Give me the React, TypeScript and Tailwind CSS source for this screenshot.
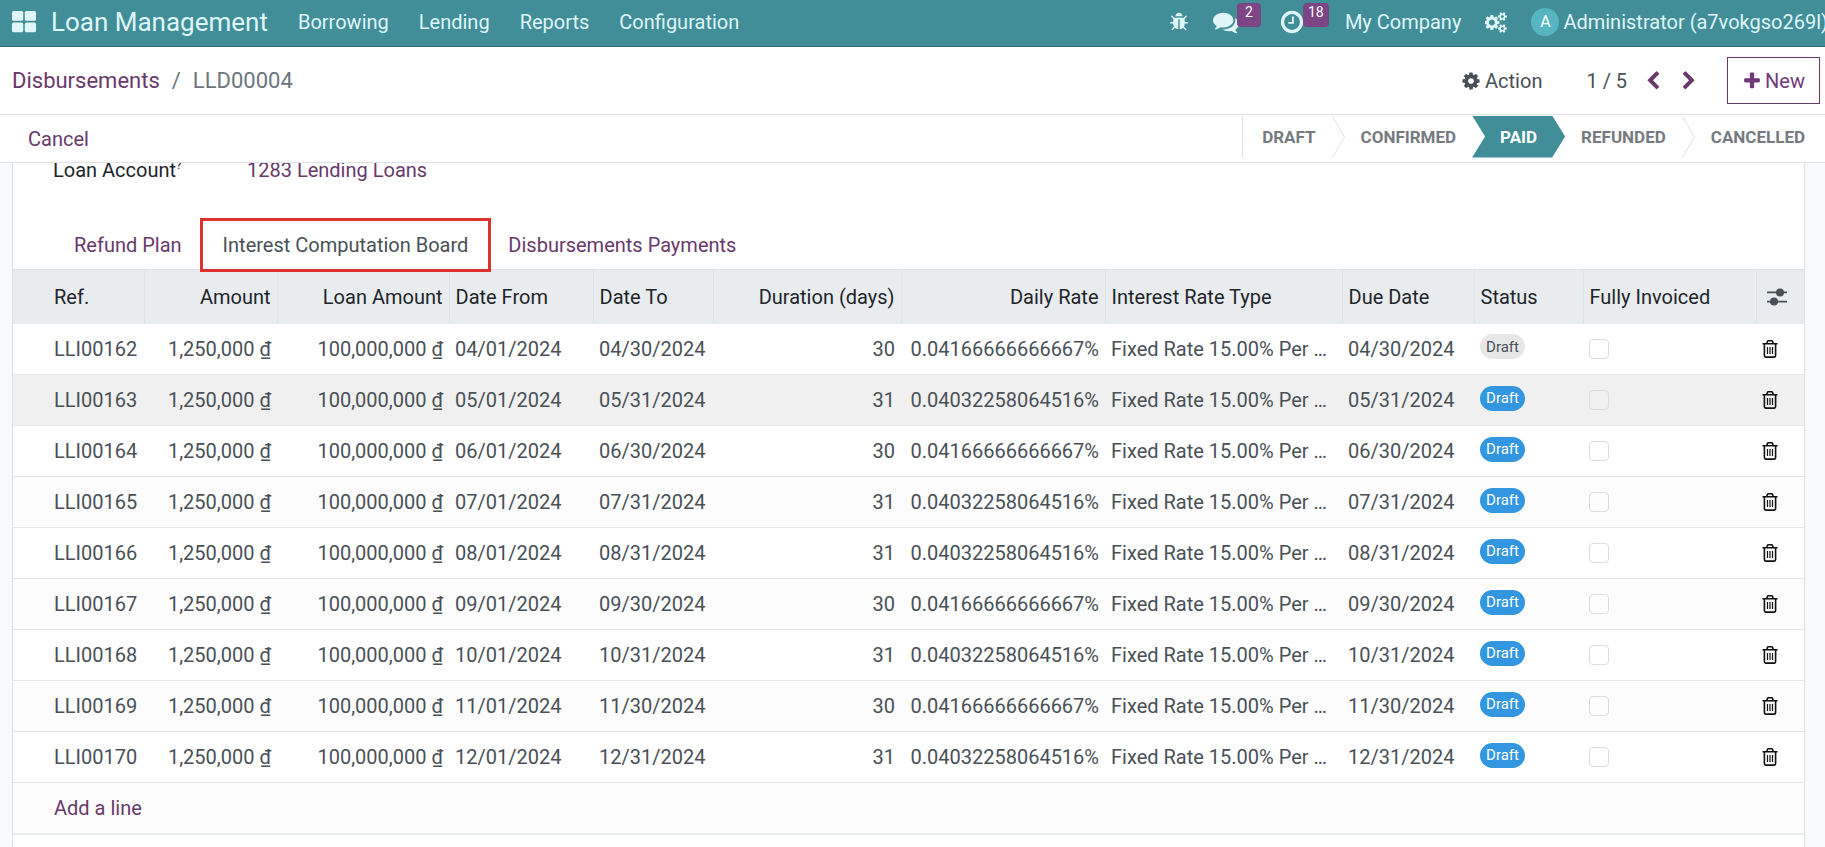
import { ReactNode } from "react";

interface InterestLine {
  ref: string;
  from: string;
  to: string;
  days: number;
  posted: boolean;
}

const LINES: InterestLine[] = [
  { ref: "LLI00162", from: "04/01/2024", to: "04/30/2024", days: 30, posted: true },
  { ref: "LLI00163", from: "05/01/2024", to: "05/31/2024", days: 31, posted: false },
  { ref: "LLI00164", from: "06/01/2024", to: "06/30/2024", days: 30, posted: false },
  { ref: "LLI00165", from: "07/01/2024", to: "07/31/2024", days: 31, posted: false },
  { ref: "LLI00166", from: "08/01/2024", to: "08/31/2024", days: 31, posted: false },
  { ref: "LLI00167", from: "09/01/2024", to: "09/30/2024", days: 30, posted: false },
  { ref: "LLI00168", from: "10/01/2024", to: "10/31/2024", days: 31, posted: false },
  { ref: "LLI00169", from: "11/01/2024", to: "11/30/2024", days: 30, posted: false },
  { ref: "LLI00170", from: "12/01/2024", to: "12/31/2024", days: 31, posted: false },
];

const RATES: Record<number, string> = {
  30: "0.04166666666667%",
  31: "0.04032258064516%",
};

const COLUMNS = [
  { label: "Ref.", className: "w-[131px] pl-[41px] pr-1.5 text-left" },
  { label: "Amount", className: "w-[133px] px-1.5 text-right" },
  { label: "Loan Amount", className: "w-[172px] px-1.5 text-right" },
  { label: "Date From", className: "w-36 px-1.5 text-left" },
  { label: "Date To", className: "w-[120px] px-1.5 text-left" },
  { label: "Duration (days)", className: "px-1.5 text-right" },
  { label: "Daily Rate", className: "w-[204px] px-1.5 text-right" },
  { label: "Interest Rate Type", className: "w-[237px] px-1.5 text-left" },
  { label: "Due Date", className: "w-[132px] px-1.5 text-left" },
  { label: "Status", className: "w-[109px] px-1.5 text-left" },
  { label: "Fully Invoiced", className: "w-[173px] px-1.5 text-left" },
];

const ICONS = {
  bug: "M1696 960q0 26-19 45t-45 19h-224q0 171-67 290l208 209q19 19 19 45t-19 45q-18 19-45 19t-45-19l-198-197q-5 5-15 13t-42 28.5-65 36.5-82 29-97 13v-896h-128v896q-51 0-101.5-13.5t-87-33-66-39-43.5-32.5l-15-14-183 207q-20 21-48 21-24 0-43-16-19-18-20.5-44.5t15.5-46.5l202-227q-58-114-58-274h-224q-26 0-45-19t-19-45 19-45 45-19h224v-294l-173-173q-19-19-19-45t19-45 45-19 45 19l173 173h844l173-173q19-19 45-19t45 19 19 45-19 45l-173 173v294h224q26 0 45 19t19 45zm-480-576h-640q0-133 93.5-226.5t226.5-93.5 226.5 93.5 93.5 226.5z",
  comments:
    "M1408 768q0 139-94 257t-256.5 186.5-353.5 68.5q-86 0-176-16-124 88-278 128-36 9-86 16h-3q-11 0-20.5-8t-11.5-21q-1-3-1-6.5t.5-6.5 2-6l2.5-5 3.5-5.5 4-5 4.5-5 4-4.5q5-6 23-25t26-29.5 22.5-29 25-38.5 20.5-44q-124-72-195-177t-71-224q0-139 94-257t256.5-186.5 353.5-68.5 353.5 68.5 256.5 186.5 94 257zm384 256q0 120-71 224.5t-195 176.5q10 24 20.5 44t25 38.5 22.5 29 26 29.5 23 25q1 1 4 4.5t4.5 5 4 5 3.5 5.5l2.5 5 2 6 .5 6.5-1 6.5q-3 14-13 22t-22 7q-50-7-86-16-154-40-278-128-90 16-176 16-271 0-472-132 58 4 88 4 161 0 309-45t264-129q125-92 192-212t67-254q0-77-23-152 129 71 204 178t75 230z",
  clock:
    "M1024 544v448q0 14-9 23t-23 9h-320q-14 0-23-9t-9-23v-64q0-14 9-23t23-9h224v-352q0-14 9-23t23-9h64q14 0 23 9t9 23zm416 352q0-148-73-273t-198-198-273-73-273 73-198 198-73 273 73 273 198 198 273 73 273-73 198-198 73-273zm224 0q0 209-103 385.5t-279.5 279.5-385.5 103-385.5-103-279.5-279.5-103-385.5 103-385.5 279.5-279.5 385.5-103 385.5 103 279.5 279.5 103 385.5z",
  cog: "M1152 896q0-106-75-181t-181-75-181 75-75 181 75 181 181 75 181-75 75-181zm512-109v222q0 12-8 23t-20 13l-185 28q-19 54-39 91 35 50 107 138 10 12 10 25t-9 23q-27 37-99 108t-94 71q-12 0-26-9l-138-108q-44 23-91 38-16 136-29 186-7 28-36 28h-222q-14 0-24.5-8.5t-11.5-21.5l-28-184q-49-16-90-37l-141 107q-10 9-25 9-14 0-25-11-126-114-165-168-7-10-7-23 0-12 8-23 15-21 51-66.5t54-70.5q-27-50-41-99l-183-27q-13-2-21-12.5t-8-23.5v-222q0-12 8-23t19-13l186-28q14-46 39-92-40-57-107-138-10-12-10-24 0-10 9-23 26-36 98.5-107.5t94.5-71.5q13 0 26 10l138 107q44-23 91-38 16-136 29-186 7-28 36-28h222q14 0 24.5 8.5t11.5 21.5l28 184q49 16 90 37l142-107q9-9 24-9 13 0 25 10 129 119 165 170 7 8 7 22 0 12-8 23-15 21-51 66.5t-54 70.5q26 50 41 98l183 28q13 2 21 12.5t8 23.5z",
  cogs: "M832 896q0-106-75-181t-181-75-181 75-75 181 75 181 181 75 181-75 75-181zm768 512q0-52-38-90t-90-38-90 38-38 90q0 53 37.5 90.5t90.5 37.5 90.5-37.5 37.5-90.5zm0-1024q0-52-38-90t-90-38-90 38-38 90q0 53 37.5 90.5t90.5 37.5 90.5-37.5 37.5-90.5zm-384 421v185q0 10-7 19.5t-16 10.5l-155 24q-11 35-32 76 34 48 90 115 7 11 7 20 0 12-7 19-23 30-82.5 89.5t-78.5 59.5q-11 0-21-7l-115-90q-37 19-77 31-11 108-23 155-7 24-30 24h-186q-11 0-20-7.5t-10-17.5l-23-153q-34-10-75-31l-118 89q-7 7-20 7-11 0-21-8-144-133-144-160 0-9 7-19 10-14 41-53t47-61q-23-44-35-82l-152-24q-10-1-17-9.5t-7-19.5v-185q0-10 7-19.5t16-10.5l155-24q11-35 32-76-34-48-90-115-7-11-7-20 0-12 7-20 22-30 82-89t79-59q11 0 21 7l115 90q34-18 77-32 11-108 23-154 7-24 30-24h186q11 0 20 7.5t10 17.5l23 153q34 10 75 31l118-89q8-7 20-7 11 0 21 8 144 133 144 160 0 8-7 19-12 16-42 54t-45 60q23 48 34 82l152 23q10 2 17 10.5t7 19.5zm640 533v140q0 16-149 31-12 27-30 52 51 113 51 138 0 4-4 7-122 71-124 71-8 0-46-47t-52-68q-20 2-30 2t-30-2q-14 21-52 68t-46 47q-2 0-124-71-4-3-4-7 0-25 51-138-18-25-30-52-149-15-149-31v-140q0-16 149-31 13-29 30-52-51-113-51-138 0-4 4-7 4-2 35-20t59-34 30-16q8 0 46 46.5t52 67.5q20-2 30-2t30 2q51-71 92-112l6-2q4 0 124 70 4 3 4 7 0 25-51 138 17 23 30 52 149 15 149 31zm0-1024v140q0 16-149 31-12 27-30 52 51 113 51 138 0 4-4 7-122 71-124 71-8 0-46-47t-52-68q-20 2-30 2t-30-2q-14 21-52 68t-46 47q-2 0-124-71-4-3-4-7 0-25 51-138-18-25-30-52-149-15-149-31v-140q0-16 149-31 13-29 30-52-51-113-51-138 0-4 4-7 4-2 35-20t59-34 30-16q8 0 46 46.5t52 67.5q20-2 30-2t30 2q51-71 92-112l6-2q4 0 124 70 4 3 4 7 0 25-51 138 17 23 30 52 149 15 149 31z",
  plus: "M1600 736v192q0 40-28 68t-68 28h-416v416q0 40-28 68t-68 28h-192q-40 0-68-28t-28-68v-416h-416q-40 0-68-28t-28-68v-192q0-40 28-68t68-28h416v-416q0-40 28-68t68-28h192q40 0 68 28t28 68v416h416q40 0 68 28t28 68z",
  left: "M1427 301l-531 531 531 531q19 19 19 45t-19 45l-166 166q-19 19-45 19t-45-19l-742-742q-19-19-19-45t19-45l742-742q19-19 45-19t45 19l166 166q19 19 19 45t-19 45z",
  right:
    "M1363 877l-742 742q-19 19-45 19t-45-19l-166-166q-19-19-19-45t19-45l531-531-531-531q-19-19-19-45t19-45l166-166q19-19 45-19t45 19l742 742q19 19 19 45t-19 45z",
};

function Icon({
  name,
  className,
  viewBox = "0 0 1792 1792",
}: {
  name: keyof typeof ICONS;
  className: string;
  viewBox?: string;
}) {
  return (
    <svg className={`shrink-0 ${className}`} viewBox={viewBox} fill="currentColor" aria-hidden="true">
      <path d={ICONS[name]} />
    </svg>
  );
}

function TrashIcon() {
  return (
    <svg
      className="h-[18px] w-4"
      viewBox="0 0 16 18"
      fill="none"
      stroke="currentColor"
      strokeWidth="1.6"
      aria-hidden="true"
    >
      <path d="M0.5 3.8h15M4.8 3.5l.7-2.2q.2-.5.8-.5h3.4q.6 0 .8.5l.7 2.2M2.4 4v11.6q0 1.5 1.3 1.5h8.6q1.3 0 1.3-1.5V4" />
      <path d="M5.5 7v7M8 7v7M10.5 7v7" strokeWidth="1.2" />
    </svg>
  );
}

function NavLink({ children }: { children: ReactNode }) {
  return (
    <a href="#" className="flex h-full items-center px-[15px]">
      {children}
    </a>
  );
}

function CountBadge({ children }: { children: ReactNode }) {
  return (
    <span className="absolute -top-1.5 left-6 h-6 min-w-6 rounded bg-[#7c4584] px-[5px] text-center text-sm leading-[18px] text-white">
      {children}
    </span>
  );
}

function Navbar() {
  return (
    <header className="flex h-[47px] shrink-0 items-center overflow-hidden whitespace-nowrap border-b border-[#2f6b72] bg-[#418e99] pb-0.5 text-[#dff6f8]">
      <button className="ml-3 mr-[15px]" aria-label="Apps">
        <svg className="h-[22px] w-6" viewBox="0 0 24 22" fill="currentColor" aria-hidden="true">
          <rect x="0" y="0" width="11.2" height="9.8" rx="1.5" />
          <rect x="12.8" y="0" width="11.2" height="9.8" rx="1.5" />
          <rect x="0" y="11.5" width="11.2" height="9.8" rx="1.5" />
          <rect x="12.8" y="11.5" width="11.2" height="9.8" rx="1.5" />
        </svg>
      </button>
      <a href="#" className="mr-[15px] text-[26px] leading-8">
        Loan Management
      </a>
      <nav className="flex h-full items-center">
        <NavLink>Borrowing</NavLink>
        <NavLink>Lending</NavLink>
        <NavLink>Reports</NavLink>
        <NavLink>Configuration</NavLink>
      </nav>
      <div className="-mr-[3px] ml-auto flex h-full shrink-0 items-center">
        <button className="mr-6" aria-label="Debug">
          <Icon name="bug" className="size-5" />
        </button>
        <button className="relative mr-10" aria-label="Messages">
          <Icon name="comments" className="size-[26px]" />
          <CountBadge>2</CountBadge>
        </button>
        <button className="relative mr-10" aria-label="Activities">
          <Icon name="clock" className="size-[26px]" />
          <CountBadge>18</CountBadge>
        </button>
        <button className="mr-6">My Company</button>
        <button className="mr-6" aria-label="Developer tools">
          <Icon name="cogs" className="h-[21px] w-[22px]" viewBox="0 0 1856 1792" />
        </button>
        <button className="flex items-center gap-1">
          <span className="flex size-7 items-center justify-center rounded-full bg-[#56b5c0] text-base text-white">
            A
          </span>
          Administrator (a7vokgso269l)
        </button>
      </div>
    </header>
  );
}

function ControlPanel() {
  return (
    <div className="flex h-[68px] shrink-0 items-center border-b border-[#dee2e6] bg-white pl-3 pr-[5px]">
      <ol className="flex gap-3 text-[22px] leading-8 text-[#6c757d]">
        <li>
          <a href="#" className="text-[#68396b]">
            Disbursements
          </a>
        </li>
        <li aria-hidden="true">/</li>
        <li>LLD00004</li>
      </ol>
      <button className="ml-auto mr-11 flex items-center gap-1">
        <Icon name="cog" className="size-5" />
        Action
      </button>
      <span className="mr-4">1 / 5</span>
      <button className="mr-4 text-[#68396b]" aria-label="Previous">
        <Icon name="left" className="size-5" />
      </button>
      <button className="mr-7 text-[#68396b]" aria-label="Next">
        <Icon name="right" className="size-5" />
      </button>
      <button className="flex h-[47px] items-center gap-[3px] border border-[#68396b] px-[14px] text-[#71397a]">
        <Icon name="plus" className="size-5" />
        New
      </button>
    </div>
  );
}

function StepDivider() {
  return (
    <svg className="h-[42px] w-[13px]" viewBox="0 0 13 42" fill="none" stroke="#dee2e6" aria-hidden="true">
      <path d="M0.5 0.5L12.5 21L0.5 41.5" />
    </svg>
  );
}

function StatusBar() {
  return (
    <div className="flex h-12 shrink-0 items-center justify-between border-b border-[#dee2e6] bg-white">
      <button className="ml-7 text-[#68396b]">Cancel</button>
      <div className="-mt-1 flex h-[42px] items-center border-l border-[#dee2e6] text-[17px] font-bold text-[#757b81]">
        <button className="pl-[19px] pr-4">DRAFT</button>
        <StepDivider />
        <button className="px-4">CONFIRMED</button>
        <button className="h-full bg-[#418e99] px-7 text-white [clip-path:polygon(0_0,calc(100%-13px)_0,100%_50%,calc(100%-13px)_100%,0_100%,13px_50%)]">
          PAID
        </button>
        <button className="px-4">REFUNDED</button>
        <StepDivider />
        <button className="pl-4 pr-5">CANCELLED</button>
      </div>
    </div>
  );
}

function InterestTable() {
  return (
    <table className="w-full table-fixed border-collapse">
      <thead>
        <tr className="h-[54px] border-t border-[#dee2e6] bg-[#e9ecef] text-[#212529]">
          {COLUMNS.map((col) => (
            <th key={col.label} className={`border-r border-[#dee2e6] font-normal ${col.className}`}>
              {col.label}
            </th>
          ))}
          <th className="w-12 pl-2.5">
            <button className="block text-[#495057]" aria-label="Optional columns">
              <svg className="h-[18px] w-5" viewBox="0 0 20 18" fill="currentColor" aria-hidden="true">
                <path d="M0 3.6h20v1.6H0zM0 12.8h20v1.6H0z" />
                <circle cx="13" cy="4.4" r="4" />
                <circle cx="7" cy="13.6" r="4" />
              </svg>
            </button>
          </th>
        </tr>
      </thead>
      <tbody>
        {LINES.map((line, index) => (
          <tr
            key={line.ref}
            className={`h-[51px] border-b border-[#e5e7ea] ${
              index === 1 ? "bg-[#f0f0f0]" : index % 2 ? "bg-[#fcfcfc]" : "bg-white"
            }`}
          >
            <td className="pl-[41px]">{line.ref}</td>
            <td className="px-1.5 text-right">1,250,000 ₫</td>
            <td className="px-1.5 text-right">100,000,000 ₫</td>
            <td className="px-1.5">{line.from}</td>
            <td className="px-1.5">{line.to}</td>
            <td className="px-1.5 text-right">{line.days}</td>
            <td className="whitespace-nowrap px-1.5 text-right">{RATES[line.days]}</td>
            <td className="whitespace-nowrap px-1.5">Fixed Rate 15.00% Per …</td>
            <td className="px-1.5">{line.to}</td>
            <td className="px-1.5">
              <span
                className={`mb-1 flex h-[25px] w-[45px] items-center justify-center rounded-full text-[15px] ${
                  line.posted ? "bg-[#e7e7e8] text-[#495057]" : "bg-[#3296e1] text-white"
                }`}
              >
                Draft
              </span>
            </td>
            <td className="px-1.5">
              <input
                type="checkbox"
                disabled
                aria-label={`${line.ref} fully invoiced`}
                className="block size-5 appearance-none rounded border border-[#d9dbde]"
              />
            </td>
            <td className="px-1.5">
              <button className="block text-[#111]" aria-label={`Delete ${line.ref}`}>
                <TrashIcon />
              </button>
            </td>
          </tr>
        ))}
        <tr className="h-[51px] border-b-2 border-[#e9ecef] bg-[#fcfcfc]">
          <td colSpan={12} className="pl-[41px]">
            <a href="#" className="text-[#68396b]">
              Add a line
            </a>
          </td>
        </tr>
      </tbody>
    </table>
  );
}

export default function App() {
  return (
    <div className="flex h-screen flex-col overflow-hidden bg-white font-[Roboto,'Noto_Sans',sans-serif] text-xl leading-[30px] text-[#495057]">
      <Navbar />
      <ControlPanel />
      <StatusBar />
      <main className="flex min-h-0 grow flex-col overflow-hidden bg-[#f8f9fa] pl-3 pr-5">
        <div className="flow-root grow border-x border-[#dee2e6] bg-white">
          {/* Form field scrolled partly under the status bar */}
          <div className="-mt-2 flex pl-10">
            <span className="w-[194px] text-[#212529]">
              Loan Account<sup className="-top-2 text-xs leading-none">?</sup>
            </span>
            <a href="#" className="text-[#68396b]">
              1283 Lending Loans
            </a>
          </div>

          {/* Notebook tabs */}
          <div className="mt-[33px] flex pl-[61px]" role="tablist">
            <button role="tab" className="-mb-[3px] mr-[18px] h-[54px] text-[#68396b]">
              Refund Plan
            </button>
            <button
              role="tab"
              aria-selected="true"
              className="relative z-10 -mb-[3px] mr-[17px] h-[54px] border-[3px] border-[#e03131] bg-white px-5"
            >
              Interest Computation Board
            </button>
            <button role="tab" className="-mb-[3px] h-[54px] text-[#68396b]">
              Disbursements Payments
            </button>
          </div>
          <InterestTable />
        </div>
      </main>
    </div>
  );
}
